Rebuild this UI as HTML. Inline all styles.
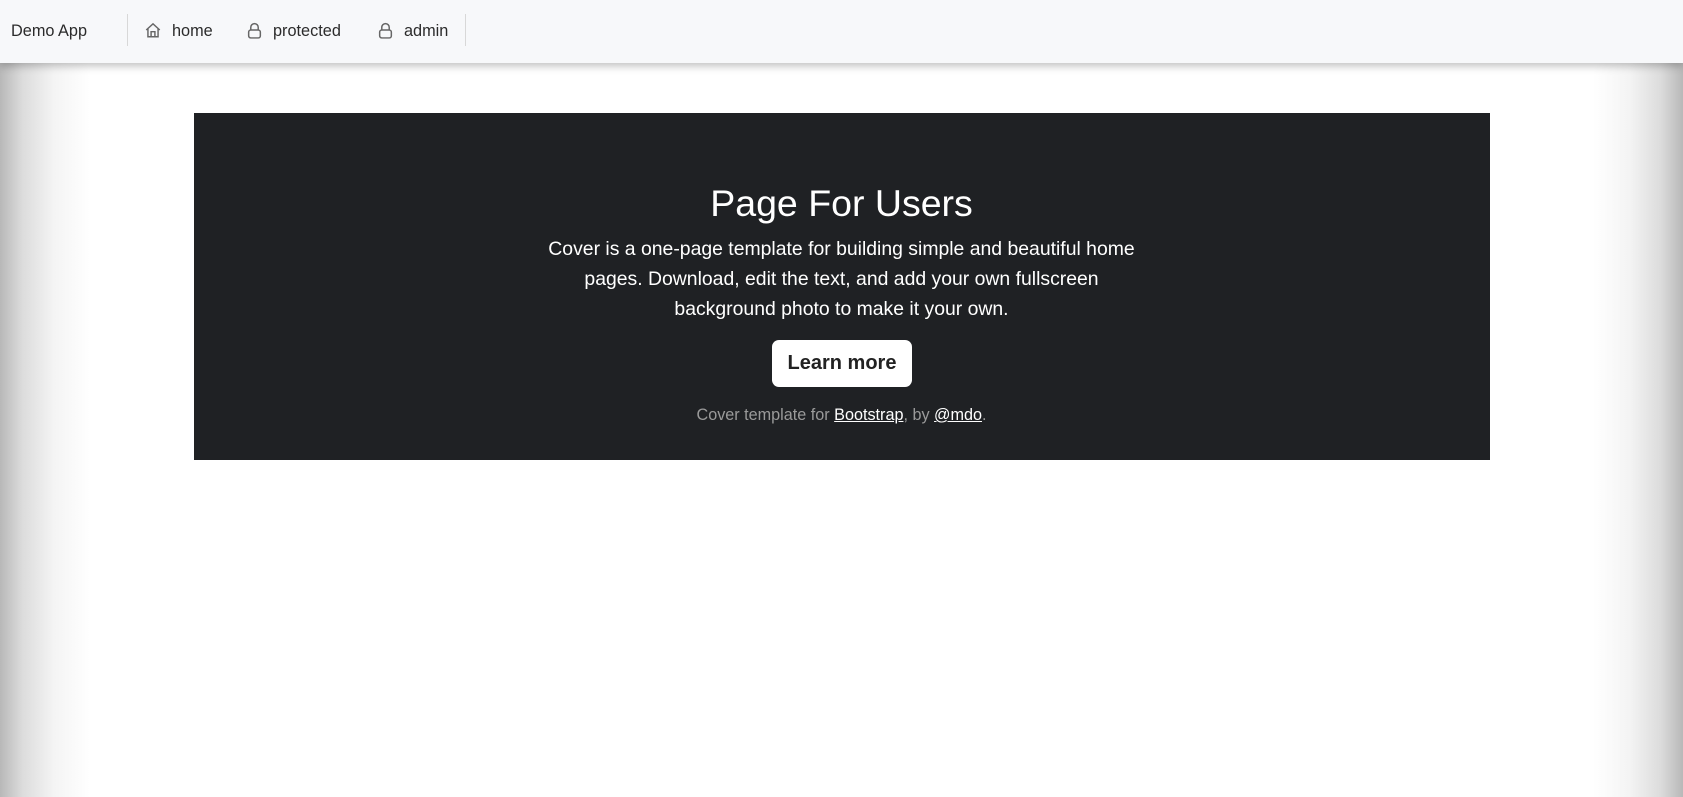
<!DOCTYPE html>
<html><head><meta charset="utf-8"><style>
*{box-sizing:border-box;margin:0;padding:0}
html,body{width:1683px;height:797px;overflow:hidden;background:#fff;font-family:"Liberation Sans",Arial,sans-serif}
.edge{position:absolute;top:0;bottom:0;width:90px}
.l{left:0;background:linear-gradient(90deg,#b8b8b8 0%,#dcdcdc 25%,#f4f4f4 60%,#fff 100%)}
.r{right:0;background:linear-gradient(270deg,#b8b8b8 0%,#dcdcdc 25%,#f4f4f4 60%,#fff 100%)}
nav{position:absolute;left:0;top:0;width:1683px;height:63px;background:#f7f8fa;box-shadow:0 3px 8px rgba(0,0,0,.25);z-index:2;font-size:16.3px;color:#2b2b2b}
nav span{position:absolute;top:21px;line-height:20px}
.div{position:absolute;top:14px;height:32px;width:1px;background:#d8d8d8}
nav svg{position:absolute;top:21px}
.box{position:absolute;left:194px;top:113px;width:1296px;height:347px;background:#1f2124;color:#fff;text-align:center}
h1{position:absolute;left:0;right:0;top:180px;font-size:37.5px;font-weight:500;line-height:46px}
.p{position:absolute;left:0;right:0;top:234px;font-size:19.4px;line-height:30px}
.btn{position:absolute;left:772px;top:340px;width:140px;height:47px;background:#fff;border-radius:7px;color:#222;font-weight:bold;font-size:20px;line-height:47px;text-align:center}
.f{position:absolute;left:0;right:0;top:406px;font-size:16.2px;color:#9a9a9a;text-align:center}
.f u{color:#fff}
</style></head><body>
<div class="edge l"></div><div class="edge r"></div>
<nav>
<span style="left:11px">Demo App</span>
<div class="div" style="left:127px"></div>
<svg style="left:144px" width="18" height="18" viewBox="0 0 16 16" fill="none" stroke="#666" stroke-width="1.3"><path d="M2 8L8 2.5 14 8M3.5 6.8V14h9V6.8M6.3 14V9.5h3.4V14"/></svg>
<span style="left:172px">home</span>
<svg style="left:246px" width="17" height="19" viewBox="0 0 16 17" fill="none" stroke="#666" stroke-width="1.4"><path d="M4.5 8V5.5a3.5 3.5 0 0 1 7 0V8"/><rect x="2.5" y="8" width="11" height="7.5" rx="2"/></svg>
<span style="left:273px">protected</span>
<svg style="left:377px" width="17" height="19" viewBox="0 0 16 17" fill="none" stroke="#666" stroke-width="1.4"><path d="M4.5 8V5.5a3.5 3.5 0 0 1 7 0V8"/><rect x="2.5" y="8" width="11" height="7.5" rx="2"/></svg>
<span style="left:404px">admin</span>
<div class="div" style="left:465px"></div>
</nav>
<div class="box"></div>
<div style="position:absolute;left:0;top:0;width:1683px;height:797px;color:#fff;text-align:center">
<h1>Page For Users</h1>
<div class="p">Cover is a one-page template for building simple and beautiful home<br>pages. Download, edit the text, and add your own fullscreen<br>background photo to make it your own.</div>
<div class="btn">Learn more</div>
<div class="f">Cover template for <u>Bootstrap</u>, by <u>@mdo</u>.</div>
</div>
</body></html>
